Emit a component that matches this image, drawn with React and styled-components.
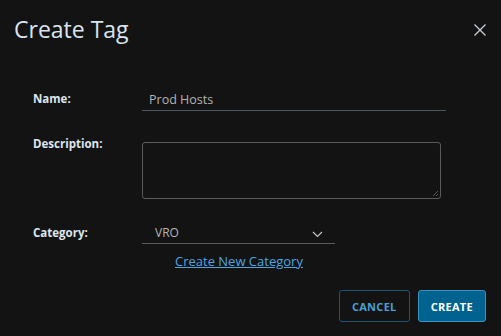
import React from 'react';
import styled, { createGlobalStyle } from 'styled-components';

const Global = createGlobalStyle`
  html, body { margin: 0; padding: 0; background: #131313; }
  body { font-family: "Open Sans", "Noto Sans", sans-serif; }
`;

const Modal = styled.div`
  width: 501px;
  height: 336px;
  box-sizing: border-box;
  background: #131313;
  display: flex;
  flex-direction: column;
`;

const Header = styled.div`
  display: flex;
  align-items: center;
  justify-content: space-between;
  height: 58px;
  padding: 0 14px 0 14px;
`;

const Title = styled.h3`
  margin: 0;
  font-size: 23px;
  line-height: 28px;
  font-weight: 400;
  color: #dbe4ee;
`;

const Close = styled.button`
  background: none;
  border: none;
  padding: 0;
  width: 14px;
  height: 14px;
  display: flex;
  margin-top: 2px;
`;

const Form = styled.div`
  display: grid;
  grid-template-columns: 109px 1fr;
  padding: 27px 54px 0 33px;
`;

const Label = styled.label`
  font-size: 11.5px;
  line-height: 14px;
  font-weight: 700;
  color: #dde5ee;
  padding-top: ${p => p.$top || 0}px;
`;

const Field = styled.div`
  padding-bottom: ${p => p.$gap || 0}px;
`;

const Input = styled.div`
  width: 304px;
  height: 26px;
  box-sizing: border-box;
  border-bottom: 1px solid #4c5559;
  font-size: 12.5px;
  line-height: 16px;
  color: #b4b4b4;
  padding: 7px 0 0 7px;
`;

const TextArea = styled.div`
  width: 299px;
  height: 57px;
  margin-top: 5px;
  box-sizing: border-box;
  border: 1px solid #5a5a5a;
  border-radius: 3px;
  position: relative;
`;

const Grip = styled.svg`
  position: absolute;
  right: 1px;
  bottom: 1px;
`;

const Select = styled.div`
  width: 193px;
  height: 22px;
  box-sizing: border-box;
  border-bottom: 1px solid #5a5a5a;
  display: flex;
  align-items: center;
  justify-content: space-between;
  padding: 0 12px 0 13px;
  font-size: 12px;
  color: #b4b4b4;
`;

const Chevron = styled.svg`
  margin-top: 3px;
`;

const Link = styled.a`
  display: inline-block;
  margin: 10px 0 0 33px;
  font-size: 13px;
  line-height: 14px;
  color: #4aa6e0;
  text-decoration: underline;
`;

const Footer = styled.div`
  display: flex;
  justify-content: flex-end;
  gap: 8px;
  padding: 19px 15px 0 0;
`;

const Button = styled.button`
  height: 32px;
  padding: 0 12px;
  border-radius: 3px;
  font-family: inherit;
  font-size: 11px;
  font-weight: 700;
  letter-spacing: 0.3px;
  background: ${p => (p.$primary ? '#00628f' : 'transparent')};
  border: 1px solid ${p => (p.$primary ? '#3b93c4' : '#1e5577')};
  color: ${p => (p.$primary ? '#ffffff' : '#4c9fd2')};
`;

export default function App() {
  return (
    <Modal>
      <Global />
      <Header>
        <Title>Create Tag</Title>
        <Close aria-label="close">
          <svg width="14" height="14" viewBox="0 0 14 14">
            <path d="M1.5 1.5L12.5 12.5M12.5 1.5L1.5 12.5" stroke="#c8d2dc" strokeWidth="1.3" />
          </svg>
        </Close>
      </Header>
      <Form>
        <Label $top={7}>Name:</Label>
        <Field $gap={26}>
          <Input>Prod Hosts</Input>
        </Field>
        <Label>Description:</Label>
        <Field $gap={23}>
          <TextArea>
            <Grip width="8" height="8" viewBox="0 0 8 8">
              <path d="M7 2L2 7M7 5L5 7" stroke="#6a6a6a" strokeWidth="0.8" />
            </Grip>
          </TextArea>
        </Field>
        <Label $top={4}>Category:</Label>
        <Field>
          <Select>
            <span>VRO</span>
            <Chevron width="11" height="7" viewBox="0 0 11 7">
              <path d="M1 1L5.5 5.5L10 1" fill="none" stroke="#c0c8d0" strokeWidth="1.2" />
            </Chevron>
          </Select>
          <Link>Create New Category</Link>
        </Field>
      </Form>
      <Footer>
        <Button>CANCEL</Button>
        <Button $primary>CREATE</Button>
      </Footer>
    </Modal>
  );
}
